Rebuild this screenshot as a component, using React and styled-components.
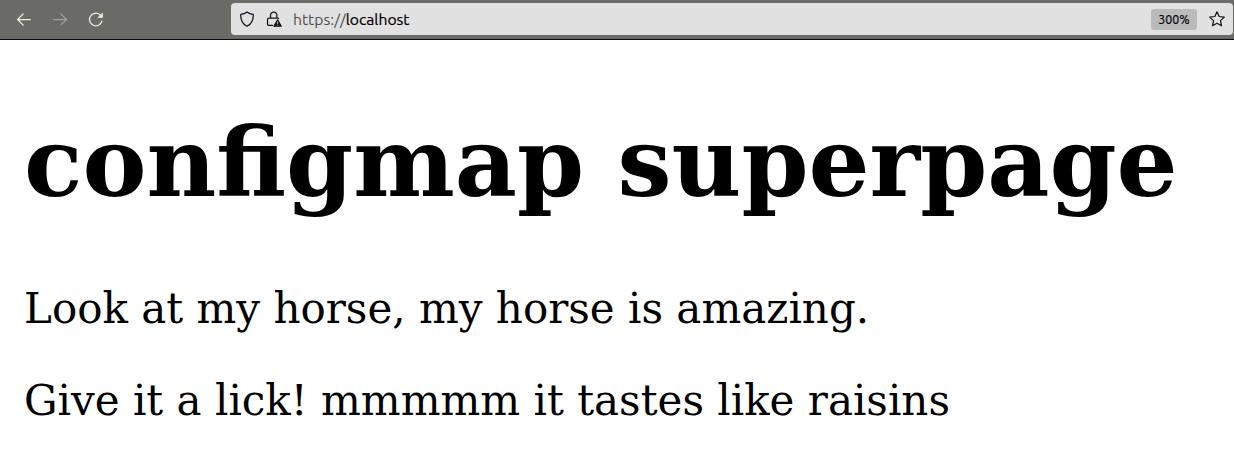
import React from 'react';
import styled, { createGlobalStyle } from 'styled-components';

const Global = createGlobalStyle`
  * { box-sizing: border-box; }
  body { margin: 0; background: #fff; overflow: hidden; }
`;
const Toolbar = styled.header`
  height: 40px;
  display: flex;
  align-items: flex-start;
  background: #6a6a67;
  border-bottom: 1px solid #0c0c0c;
  font-family: Ubuntu, "Noto Sans", sans-serif;
`;
const Nav = styled.nav`
  width: 231px;
  height: 39px;
  padding: 1px 0 0 16px;
  display: flex;
  align-items: center;
  gap: 20px;
`;
const Icon = styled.svg`
  width: 16px;
  height: 16px;
  flex: none;
  fill: none;
  stroke: ${(p) => p.$color || '#15141a'};
  stroke-width: 1.25;
  stroke-linecap: round;
  stroke-linejoin: round;
  opacity: ${(p) => p.$opacity || 1};
`;
const AddressBar = styled.div`
  flex: 1;
  height: 32px;
  margin: 3px 1px 0 0;
  padding: 0 8px;
  display: flex;
  align-items: center;
  background: #e1e1e1;
  border-radius: 4px;
`;
const Identity = styled.div`
  display: flex;
  gap: 11px;
  width: 54px;
`;
const Url = styled.span`
  flex: 1;
  font-size: 15.7px;
  line-height: 20px;
  color: #4f4f4f;
`;
const Host = styled.span`
  color: #000;
  -webkit-text-stroke: 0.2px #000;
`;
const Zoom = styled.span`
  width: 46px;
  height: 21px;
  margin-right: 12px;
  line-height: 21px;
  text-align: center;
  font-size: 12.4px;
  color: #000;
  -webkit-text-stroke: 0.2px #000;
  background: #bababa;
  border-radius: 3px;
`;
const Page = styled.main`
  padding: 0 24px;
  font-family: "DejaVu Serif", serif;
  color: #000;
`;
const Title = styled.h1`
  margin: 67px 0 65px;
  font-size: 96px;
  line-height: 112px;
  white-space: nowrap;
`;
const Text = styled.p`
  margin: 0 0 42px;
  font-size: 42px;
  line-height: 50px;
  white-space: nowrap;
`;

const cream = '#f3f3d8';

export default function App() {
  return (
    <>
      <Global />
      <Toolbar>
        <Nav>
          <Icon viewBox="0 0 16 16" $color={cream}>
            <path d="M14.4 7.5H1.8M7.2 1.9 1.6 7.500l5.600 5.600" />
          </Icon>
          <Icon viewBox="0 0 16 16" $color={cream} $opacity={0.4}>
            <path d="M1.6 7.5h12.600M8.800 1.900l5.600 5.600-5.600 5.600" />
          </Icon>
          <Icon viewBox="0 0 16 16" $color={cream}>
            <path d="M13.9 9.2A6.3 6.3 0 1 1 11.900 2.700" />
            <path d="M14.500 1.200v4.300h-4.300Z" fill={cream} strokeWidth="0.6" />
          </Icon>
        </Nav>
        <AddressBar>
          <Identity>
            <Icon viewBox="0 0 16 16">
              <path d="M8 .9C9.700 2.200 11.800 3 14.200 3.300c.4 5.700-1.400 9.500-6.200 12C3.200 12.800 1.400 9 1.800 3.300 4.200 3 6.300 2.200 8 .9Z" />
            </Icon>
            <Icon viewBox="0 0 16 16">
              <path d="M4.500 7V4.300a3.200 3.200 0 0 1 6.400 0V7M6.500 14.400H3a1.500 1.500 0 0 1-1.500-1.500V8.500A1.500 1.500 0 0 1 3 7h8.500a1.500 1.500 0 0 1 1 .5" />
              <path d="M11.600 8.900 15.300 15.200H7.900Z" fill="#15141a" strokeWidth="1.2" />
              <path d="M11.600 10.700v1.900M11.600 14v.2" stroke="#e1e1e1" strokeWidth="0.8" />
            </Icon>
          </Identity>
          <Url>https://<Host>localhost</Host></Url>
          <Zoom>300%</Zoom>
          <Icon viewBox="0 0 16 16">
            <path d="m8 .8 2.200 4.700 5.100.6-3.800 3.500 1 5.200L8 12.300l-4.500 2.500 1-5.200L.7 6.100l5.100-.6Z" />
          </Icon>
        </AddressBar>
      </Toolbar>
      <Page>
        <Title>configmap superpage</Title>
        <Text>Look at my horse, my horse is amazing.</Text>
        <Text>Give it a lick! mmmmm it tastes like raisins</Text>
      </Page>
    </>
  );
}
